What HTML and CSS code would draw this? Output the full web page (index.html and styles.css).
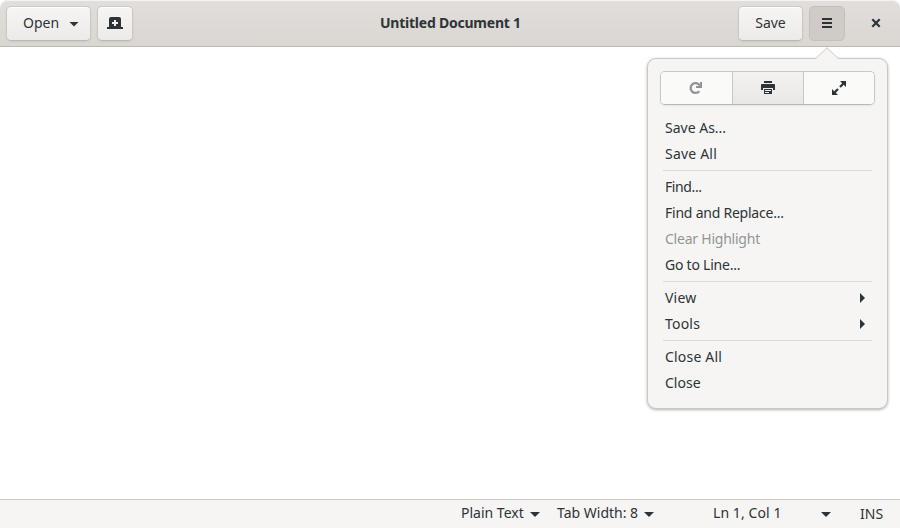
FILE: index.html
```html
<!DOCTYPE html>
<html lang="en">
<head>
<meta charset="utf-8">
<title>Untitled Document 1</title>
<link rel="stylesheet" href="styles.css">
</head>
<body>
<div class="window">
  <header class="headerbar">
    <button class="btn open"><span>Open</span><i class="arrow-down"></i></button>
    <button class="btn icon-btn">
      <svg width="16" height="16" viewBox="0 0 16 16"><path fill="#2e3436" fill-rule="evenodd" d="M2 12V4q0-2 2-2h8q2 0 2 2v8h2v2H0v-2zM7 5v2H5v2h2v2h2V9h2V7H9V5z"/></svg>
    </button>
    <h1 class="title"><span class="tight">Untitled Document 1</span></h1>
    <button class="btn save"><span>Save</span></button>
    <button class="btn icon-btn active">
      <svg width="16" height="16" viewBox="0 0 16 16"><path fill="#2e3436" d="M3 3h10v2H3zM3 7h10v2H3zM3 11h10v2H3z"/></svg>
    </button>
    <button class="close">
      <svg width="16" height="16" viewBox="0 0 16 16"><path stroke="#2e3436" stroke-width="2.2" d="M4.300 4.300l7.400 7.400M11.700 4.300l-7.400 7.400"/></svg>
    </button>
  </header>
  <main class="editor"></main>
  <footer class="statusbar">
    <div class="status lang"><span>Plain Text</span><i class="arrow-down"></i></div>
    <div class="status tab"><span>Tab Width: 8</span><i class="arrow-down"></i></div>
    <div class="status position"><span class="slightly-loose">Ln 1, Col 1</span><i class="arrow-down"></i></div>
    <div class="status mode"><span>INS</span></div>
  </footer>
  <div class="popover">
    <svg class="pointer" width="22" height="12" viewBox="0 0 22 12"><path fill="#f6f5f4" d="M0 12v-1L11 .5 22 11v1z"/><path fill="none" stroke="#cdc7c2" d="M0 11.300L11 .7l11 10.600"/></svg>
    <div class="linked">
      <button class="seg disabled"><svg width="16" height="16" viewBox="0 0 16 16"><path fill="none" stroke="#929595" stroke-width="2.300" d="M11.500 5.200A4.900 4.900 0 1 0 11.300 11.200"/><path fill="#929595" d="M14 2v6H8V6h2.500L12 4.500V2z"/></svg></button>
      <button class="seg raised"><svg width="16" height="16" viewBox="0 0 16 16"><path fill="#2e3436" fill-rule="evenodd" d="M4 1h8v2H4zM2 4h12q1 0 1 1v5h-2V8H3v2H1V5q0-1 1-1zM4 9h8v5H4zM5 10v1h6v-1zM5 12v1h4v-1z"/></svg></button>
      <button class="seg"><svg width="16" height="16" viewBox="0 0 16 16"><path fill="#2e3436" d="M9 1h6v6l-2.200-2.200-3 3-1.600-1.600 3-3zM1 15V9l2.200 2.200 3-3 1.600 1.600-3 3L7 15z"/></svg></button>
    </div>
    <nav class="menu">
      <div class="item"><span>Save As...</span></div>
      <div class="item"><span class="loose">Save All</span></div>
      <hr>
      <div class="item"><span class="tighter">Find...</span></div>
      <div class="item"><span class="tight">Find and Replace...</span></div>
      <div class="item muted"><span class="tight">Clear Highlight</span></div>
      <div class="item"><span class="tight">Go to Line...</span></div>
      <hr>
      <div class="item"><span class="loose">View</span><i class="arrow-right"></i></div>
      <div class="item"><span class="loose">Tools</span><i class="arrow-right"></i></div>
      <hr>
      <div class="item"><span class="loose">Close All</span></div>
      <div class="item"><span>Close</span></div>
    </nav>
  </div>
</div>
</body>
</html>
```
FILE: styles.css
```css
* { box-sizing: border-box; }
body { margin: 0; background: #fff; color: #2e3436; font: 14px/20px "Noto Sans", "Open Sans", sans-serif; }
button { font: inherit; color: inherit; padding: 0; margin: 0; }
svg { display: block; flex: none; }
span { white-space: nowrap; }
.tight { letter-spacing: -.23px; }
.tighter { letter-spacing: -.4px; }
.loose { letter-spacing: .2px; }
.slightly-loose { letter-spacing: .08px; }
.window { position: relative; width: 900px; height: 528px; display: flex; flex-direction: column; }
.headerbar { height: 47px; display: flex; align-items: center; padding: 0 7px 0 6px; border-bottom: 1px solid #bfb8b1; border-radius: 8px 8px 0 0; background: linear-gradient(to top, #dad6d2, #e1dedb); box-shadow: inset 0 1px #f5f4f2; }
.btn { height: 35px; display: flex; align-items: center; justify-content: center; border: 1px solid #cdc7c2; border-bottom-color: #bfb8b1; border-radius: 5px; background: linear-gradient(to top, #edebe9, #f6f5f4); box-shadow: inset 0 1px #fff, 0 1px 2px rgba(0,0,0,.07); }
.open { width: 85px; justify-content: flex-start; padding-left: 16px; }
.open .arrow-down { margin-left: auto; margin-right: 11px; }
.icon-btn { width: 36px; margin-left: 6px; }
.title { flex: 1; display: flex; margin: 0; padding-left: 247px; font-size: 14px; font-weight: 700; line-height: 20px; }
.save { width: 65px; }
.active { background: #d0cbc6; border-color: #c5bfb9; box-shadow: none; }
.close { width: 36px; height: 34px; margin-left: 13px; margin-right: -1px; border: 0; background: none; display: flex; align-items: center; justify-content: center; }
.arrow-down { width: 10px; height: 5px; background: #2e3436; clip-path: polygon(0 0, 100% 0, 50% 100%); margin-top: 2px; flex: none; }
.arrow-right { width: 5px; height: 10px; background: #2e3436; clip-path: polygon(0 0, 100% 50%, 0 100%); margin-left: auto; margin-right: 7px; }
.editor { flex: 1; background: #fff; }
.statusbar { height: 29px; border-top: 1px solid #cdc7c2; background: #f6f5f4; display: flex; padding: 0 0 1px 461px; }
.status { display: flex; align-items: center; justify-content: space-between; height: 27px; }
.status:not(.mode) span { padding-bottom: 2px; }
.lang { width: 79px; }
.tab { width: 97px; margin-left: 17px; }
.position { width: 118px; margin-left: 59px; }
.mode { margin-left: 29px; }
.popover { position: absolute; left: 647px; top: 58px; width: 241px; height: 351px; border: 1px solid #cdc7c2; border-radius: 9px; background: #f6f5f4; padding: 12px; box-shadow: 0 1px 3px rgba(0,0,0,.3); }
.pointer { position: absolute; left: 168px; top: -12px; }
.linked { display: flex; height: 34px; border: 1px solid #cdc7c2; border-bottom-color: #bfb8b1; border-radius: 5px; overflow: hidden; box-shadow: 0 1px 2px rgba(0,0,0,.07); }
.seg { flex: 0 0 71px; border: 0; border-right: 1px solid #cdc7c2; background: #fafaf9; display: flex; align-items: center; justify-content: center; }
.seg:first-child { flex-basis: 72px; padding-right: 1px; }
.seg:last-child { flex: 1; border-right: 0; }
.raised { background: linear-gradient(to top, #eae8e6, #f3f2f1); }
.menu { margin: 10px 3px 0; }
.item { height: 26px; padding-left: 2px; display: flex; align-items: center; }
.menu hr { border: 0; height: 1px; background: #dcdad8; margin: 3px 0; }
.muted { color: #929595; }
```
